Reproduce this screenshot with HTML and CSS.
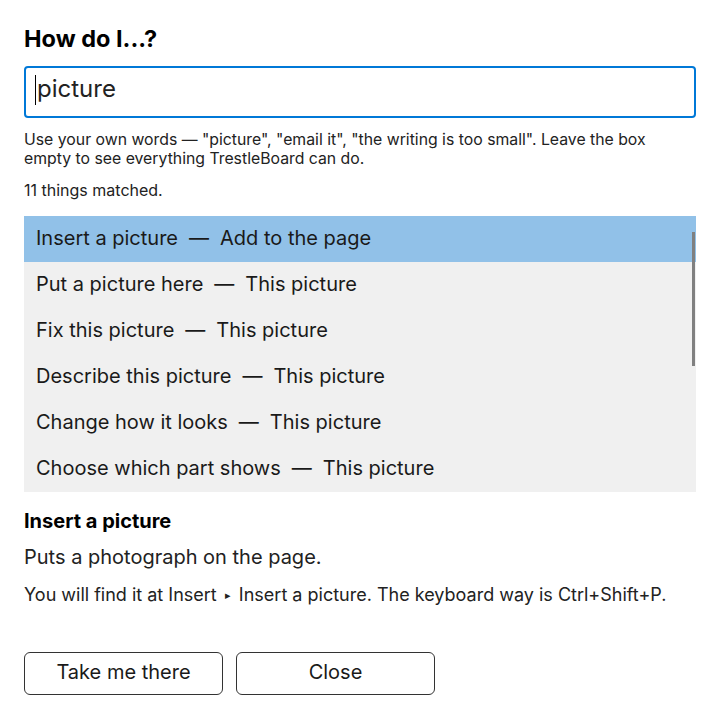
FILE: index.html
```html
<!DOCTYPE html>
<html lang="en">
<head>
<meta charset="utf-8">
<title>How do I...?</title>
<link rel="stylesheet" href="styles.css">
</head>
<body>
<main class="dialog">
  <h1 class="title">How do I...?</h1>
  <div class="search"><span class="caret"></span>picture</div>
  <p class="hint">Use your own words — "picture", "email it", "the writing is too small". Leave the box empty to see everything TrestleBoard can do.</p>
  <p class="count">11 things matched.</p>
  <div class="results">
    <ul class="list">
      <li class="item selected">Insert a picture<span class="sep">—</span>Add to the page</li>
      <li class="item">Put a picture here<span class="sep">—</span>This picture</li>
      <li class="item">Fix this picture<span class="sep">—</span>This picture</li>
      <li class="item">Describe this picture<span class="sep">—</span>This picture</li>
      <li class="item">Change how it looks<span class="sep">—</span>This picture</li>
      <li class="item">Choose which part shows<span class="sep">—</span>This picture</li>
    </ul>
    <div class="thumb"></div>
  </div>
  <h2 class="detail-title">Insert a picture</h2>
  <p class="detail-desc">Puts a photograph on the page.</p>
  <p class="detail-path">You will find it at Insert <span class="arrow">▸</span> Insert a picture. The keyboard way is Ctrl+Shift+P.</p>
  <div class="actions">
    <button class="btn">Take me there</button>
    <button class="btn">Close</button>
  </div>
</main>
</body>
</html>
```
FILE: styles.css
```css
* { box-sizing: border-box; }
html, body { margin: 0; padding: 0; background: #fff; }
body {
  font-family: Inter, "Noto Sans", "Liberation Sans", sans-serif;
  color: #111;
}
.dialog {
  padding: 22px 24px 0 24px;
  display: flex;
  flex-direction: column;
}
.title {
  margin: 0;
  font-size: 23.5px;
  line-height: 34px;
  font-weight: 700;
  color: #000;
}
.search {
  margin-top: 10px;
  height: 52px;
  border: 2px solid #0078d7;
  border-radius: 4px;
  padding: 0 9px 7px 9px;
  font-size: 24px;
  color: #222;
  display: flex;
  align-items: center;
}
.caret {
  display: inline-block;
  width: 1px;
  height: 30px;
  background: #000;
  margin: 3px 1px 0 0;
}
.hint {
  margin: 12px 0 0 0;
  font-size: 15.8px;
  line-height: 19px;
  color: #222;
}
.count {
  margin: 13px 0 0 0;
  font-size: 16px;
  line-height: 19px;
  color: #222;
}
.results {
  position: relative;
  margin-top: 16px;
  background: #f0f0f0;
}
.list {
  list-style: none;
  margin: 0;
  padding: 0;
}
.item {
  height: 46px;
  padding: 0 12px 3px 12px;
  display: flex;
  align-items: center;
  font-size: 20px;
  color: #1a1a1a;
}
.item.selected { background: #91c1e8; }
.sep { margin: 0 11px; }
.thumb {
  position: absolute;
  right: 1px;
  top: 16px;
  width: 3px;
  height: 134px;
  background: #808080;
}
.detail-title {
  margin: 17px 0 0 0;
  font-size: 20px;
  line-height: 24px;
  font-weight: 700;
  color: #000;
}
.detail-desc {
  margin: 12px 0 0 0;
  font-size: 20px;
  line-height: 24px;
  color: #222;
}
.detail-path {
  margin: 15px 0 0 0;
  font-size: 18px;
  line-height: 22px;
  color: #222;
}
.arrow { font-size: 11px; vertical-align: 2px; margin: 0 3px; }
.actions {
  margin-top: 46px;
  display: flex;
  gap: 13px;
}
.btn {
  width: 199px;
  height: 43px;
  background: #fff;
  border: 1px solid #333;
  border-radius: 6px;
  font-family: inherit;
  font-size: 20px;
  color: #1a1a1a;
  padding: 0 0 4px 0;
}
```
